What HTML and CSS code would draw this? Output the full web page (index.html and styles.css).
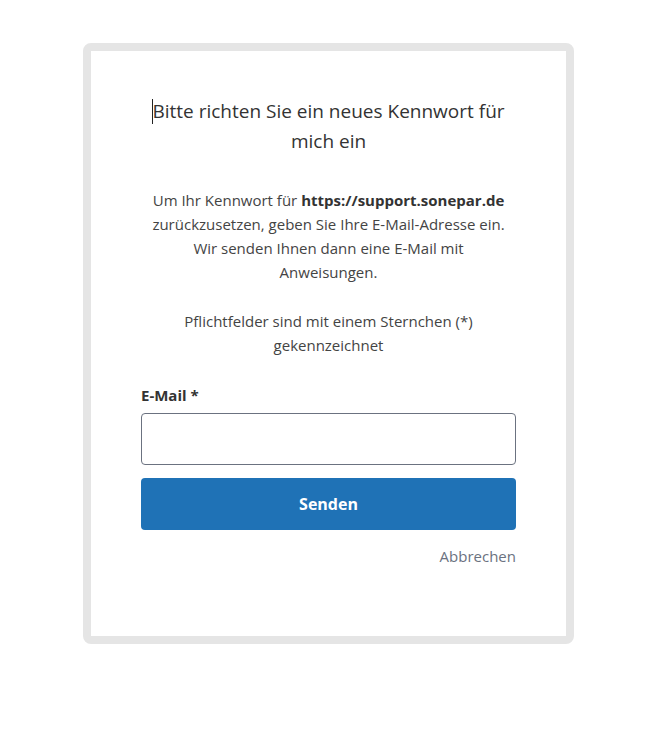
FILE: index.html
```html
<!DOCTYPE html>
<html>
<head>
    <link rel="stylesheet" href="styles.css">
</head>
<body>
    <div class="card">
        <h1 class="title"><span class="caret"></span>Bitte richten Sie ein neues Kennwort für mich ein</h1>

        <p class="intro">Um Ihr Kennwort für <strong>https://support.sonepar.de</strong> zurückzusetzen, geben Sie Ihre E-Mail-Adresse ein. Wir senden Ihnen dann eine E-Mail mit Anweisungen.</p>

        <p class="intro">Pflichtfelder sind mit einem Sternchen (*) gekennzeichnet</p>

        <form class="form">
            <label for="email">E-Mail *</label>
            <input type="email" id="email">
            <button type="button" class="send">Senden</button>
            <a class="cancel" href="#">Abbrechen</a>
        </form>
    </div>
</body>
</html>
```

FILE: styles.css
```css
body {
    margin: 0;
    padding: 0;
    background: #fff;
    color: #333;
    font-family: "Open Sans", "Noto Sans", sans-serif;
}

.card {
    box-sizing: border-box;
    width: 491px;
    margin: 43px 0 0 83px;
    padding: 45px 50px 68px;
    background: #fff;
    border: 8px solid #e5e5e5;
    border-radius: 8px;
}

.title {
    margin: 0 0 32px;
    font-size: 19px;
    font-weight: 400;
    line-height: 30px;
    text-align: center;
    color: #333;
}

.caret {
    display: inline-block;
    width: 1px;
    height: 25px;
    margin-right: -1px;
    vertical-align: -6px;
    background: #222;
}

.intro {
    margin: 0 0 25px;
    padding: 0 6px;
    font-size: 15px;
    line-height: 24px;
    text-align: center;
    color: #444;
}

.intro strong {
    color: #333;
}

.form {
    display: flex;
    flex-direction: column;
    margin-top: 26px;
}

label {
    font-size: 15px;
    font-weight: 700;
    line-height: 24px;
    color: #333;
    margin-bottom: 6px;
}

input {
    box-sizing: border-box;
    height: 52px;
    border: 1px solid #6b7280;
    border-radius: 4px;
    padding: 0 12px;
    font-size: 15px;
}

.send {
    height: 52px;
    margin-top: 13px;
    border: none;
    border-radius: 4px;
    background: #1f72b6;
    color: #fff;
    font-family: inherit;
    font-size: 16px;
    font-weight: 700;
    cursor: pointer;
}

.cancel {
    align-self: flex-end;
    margin-top: 14px;
    font-size: 15px;
    line-height: 24px;
    color: #6b7280;
    text-decoration: none;
}
```
